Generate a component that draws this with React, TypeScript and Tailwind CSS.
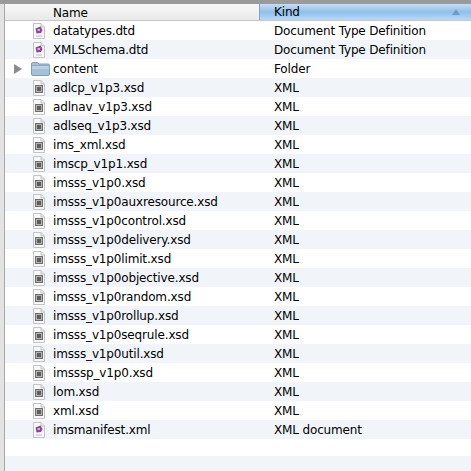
const rows: [string, string, "dtd" | "xsd" | "folder"][] = [
  ["datatypes.dtd", "Document Type Definition", "dtd"],
  ["XMLSchema.dtd", "Document Type Definition", "dtd"],
  ["content", "Folder", "folder"],
  ["adlcp_v1p3.xsd", "XML", "xsd"],
  ["adlnav_v1p3.xsd", "XML", "xsd"],
  ["adlseq_v1p3.xsd", "XML", "xsd"],
  ["ims_xml.xsd", "XML", "xsd"],
  ["imscp_v1p1.xsd", "XML", "xsd"],
  ["imsss_v1p0.xsd", "XML", "xsd"],
  ["imsss_v1p0auxresource.xsd", "XML", "xsd"],
  ["imsss_v1p0control.xsd", "XML", "xsd"],
  ["imsss_v1p0delivery.xsd", "XML", "xsd"],
  ["imsss_v1p0limit.xsd", "XML", "xsd"],
  ["imsss_v1p0objective.xsd", "XML", "xsd"],
  ["imsss_v1p0random.xsd", "XML", "xsd"],
  ["imsss_v1p0rollup.xsd", "XML", "xsd"],
  ["imsss_v1p0seqrule.xsd", "XML", "xsd"],
  ["imsss_v1p0util.xsd", "XML", "xsd"],
  ["imsssp_v1p0.xsd", "XML", "xsd"],
  ["lom.xsd", "XML", "xsd"],
  ["xml.xsd", "XML", "xsd"],
  ["imsmanifest.xml", "XML document", "dtd"],
];

const FileIcon = ({ type }: { type: "dtd" | "xsd" | "folder" }) => {
  if (type === "folder") {
    return (
      <svg width="19" height="14" viewBox="0 0 19 14">
        <path d="M0.5 2 Q0.5 0.5 2 0.5 H6.5 L8 2 H17 Q18.5 2 18.5 3.5 V12 Q18.5 13.5 17 13.5 H2 Q0.5 13.5 0.5 12 Z" fill="#a3c1d9" stroke="#7f9db6" />
        <rect x="1" y="3" width="17" height="1" fill="#7f9db6" opacity="0.6" />
        <rect x="1" y="4" width="17" height="3" fill="#b9d2e4" />
      </svg>
    );
  }
  return (
    <svg width="12" height="16" viewBox="0 0 12 16">
      <path d="M0.5 0.5 H8 L11.5 4 V15.5 H0.5 Z" fill="#f8f8f8" stroke="#c4c4c4" />
      <path d="M8 0.5 V4 H11.5" fill="#e6e6e6" stroke="#c4c4c4" />
      {type === "xsd" ? (
        <>
          <rect x="2.5" y="5.5" width="7" height="7" fill="#b4b4b4" stroke="#6e6e6e" />
          <rect x="4" y="7" width="4" height="4" fill="#5e5e5e" />
        </>
      ) : (
        <>
          <path d="M2.5 5.5 L7.5 3.5 L9.5 7 L8 10 L3.5 10.5 Z" fill="#93409f" />
          <rect x="4.5" y="6" width="2.5" height="2" fill="#d4aede" />
          <rect x="3" y="12.5" width="6" height="1" fill="#bcbcbc" />
        </>
      )}
    </svg>
  );
};

export default function App() {
  return (
    <div className="w-[471px] h-[471px] overflow-hidden flex flex-col bg-white text-[12px] tracking-[-0.15px] text-black font-['Lucida_Grande','DejaVu_Sans',sans-serif]">
      <div className="h-[4px] shrink-0 bg-[#9a9a9a]" />
      <div className="flex-1 flex min-h-0">
        <div className="w-[5px] shrink-0 bg-[#e3e3e3] border-r border-[#a8a8a8]" />
        <div className="flex-1 min-w-0 flex flex-col">
          <div className="h-[17px] shrink-0 flex bg-gradient-to-b from-[#f8f8f8] to-[#e9e9e9] border-b border-[#c8c8c8]">
            <div className="w-[254px] pl-[48px] leading-[18px]">Name</div>
            <div className="flex-1 flex items-center justify-between pl-[14px] pr-[11px] leading-[18px] bg-gradient-to-b from-[#c5def5] via-[#8fbfeb] to-[#b9d9f5] border-l border-[#7da6cf]">
              <span>Kind</span>
              <span className="w-0 h-0 border-x-[4px] border-x-transparent border-b-[6px] border-b-[#6e9cc9]" />
            </div>
          </div>
          {rows.map(([name, kind, type], i) => (
            <div key={name} className={`h-[19px] shrink-0 flex items-center ${i % 2 === 1 ? "bg-[#f1f5fa]" : "bg-white"}`}>
              <div className="w-[254px] flex items-center min-w-0">
                <div className="w-[8px] ml-[9px] shrink-0">
                  {type === "folder" && <span className="block w-0 h-0 border-y-[5px] border-y-transparent border-l-[8px] border-l-[#8c8c8c]" />}
                </div>
                <div className={`w-[20px] ml-[9px] shrink-0 flex ${type === "folder" ? "" : "pl-[2px]"}`}>
                  <FileIcon type={type} />
                </div>
                <span className="ml-[2px] truncate">{name}</span>
              </div>
              <span className="pl-[15px]">{kind}</span>
            </div>
          ))}
          <div className="h-[17px] shrink-0 bg-white" />
          <div className="flex-1 bg-[#f1f5fa]" />
        </div>
      </div>
    </div>
  );
}
